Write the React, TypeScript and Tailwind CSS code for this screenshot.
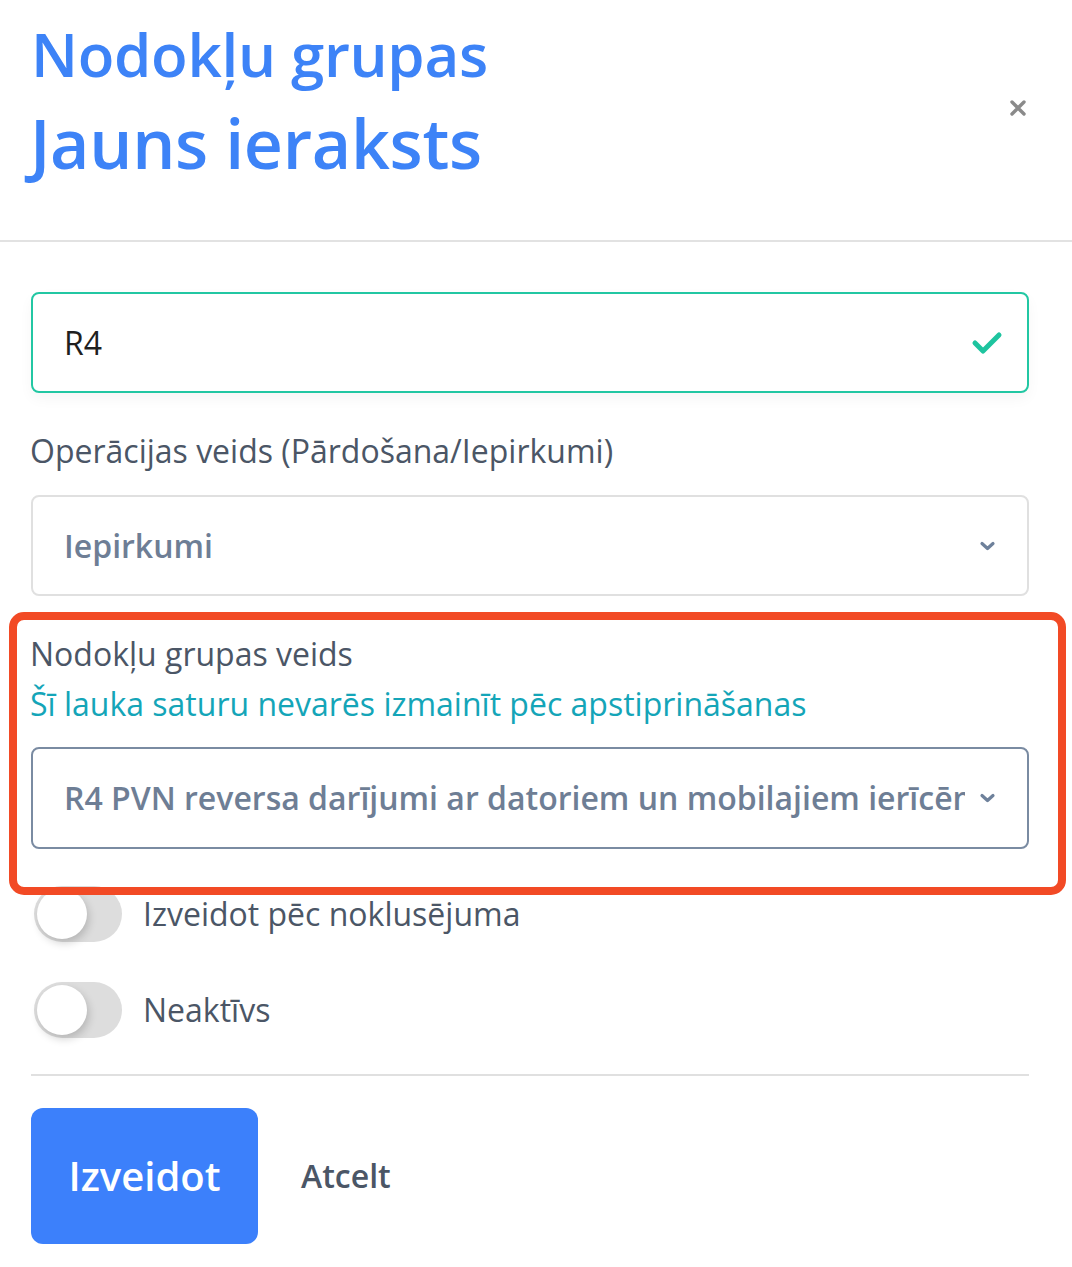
import React from "react";

const font = { fontFamily: '"Open Sans", "Noto Sans", sans-serif' };

function Chevron() {
  return (
    <svg width="17" height="10" viewBox="0 0 17 10" className="shrink-0">
      <path d="M3 2.5 L8.5 7.5 L14 2.5" fill="none" stroke="#6e819b" strokeWidth="3.2" strokeLinecap="round" strokeLinejoin="round" />
    </svg>
  );
}

function Toggle({ label }: { label: string }) {
  return (
    <div className="flex items-center h-[56px]">
      <div className="relative w-[88px] h-[56px] rounded-full bg-[#dddddd] ml-[3px] shrink-0">
        <div className="absolute left-[3px] top-[3px] w-[50px] h-[50px] rounded-full bg-white shadow-[2px_4px_8px_rgba(0,0,0,0.18)]" />
      </div>
      <span className="ml-[21px] text-[32px] leading-[44px] text-[#4b5666]">{label}</span>
    </div>
  );
}

export default function App() {
  return (
    <div className="relative w-[1072px] h-[1267px] bg-white" style={font}>
      {/* Header */}
      <div className="flex items-center justify-between border-b-2 border-[#e2e2e2] pl-[31px] pr-[43px] pt-[12px] pb-[50px]">
        <div className="font-semibold text-[#3d83f7]">
          <div className="text-[60px] leading-[84px] tracking-[-0.3px]">Nodokļu grupas</div>
          <div className="text-[68px] leading-[94px] -ml-[1px] tracking-[-0.3px]">Jauns ieraksts</div>
        </div>
        <button className="mt-[14px] w-[22px] h-[22px] flex items-center justify-center">
          <svg width="20" height="20" viewBox="0 0 20 20">
            <path d="M4 4 L16 16 M16 4 L4 16" stroke="#8a8a8a" strokeWidth="3.4" strokeLinecap="round" />
          </svg>
        </button>
      </div>

      {/* Form */}
      <div className="pl-[31px] pr-[43px] pt-[50px]">
        <div className="flex items-center justify-between h-[101px] rounded-[8px] border-2 border-[#22c7a3] pl-[31px] pr-[24px] shadow-[0_6px_14px_rgba(0,0,0,0.04)]">
          <span className="text-[32px] text-[#1f1f1f]">R4</span>
          <svg width="32" height="26" viewBox="0 0 32 26">
            <path d="M4 13 L12 21 L28 5" fill="none" stroke="#1ec49f" strokeWidth="5" strokeLinecap="round" strokeLinejoin="round" />
          </svg>
        </div>

        <div className="mt-[36px] text-[32px] leading-[44px] text-[#4b5666] -ml-[1px]">Operācijas veids (Pārdošana/Iepirkumi)</div>

        <div className="mt-[22px] flex items-center justify-between h-[101px] rounded-[8px] border-2 border-[#e0e0e0] pl-[31px] pr-[31px]">
          <span className="text-[32px] font-semibold text-[#6e7e95]">Iepirkumi</span>
          <Chevron />
        </div>

        <div className="mt-[36px] text-[32px] leading-[44px] text-[#4b5666] -ml-[1px]">Nodokļu grupas veids</div>
        <div className="mt-[6px] text-[32px] leading-[44px] text-[#14a5b8] -ml-[1px]">Šī lauka saturu nevarēs izmainīt pēc apstiprināšanas</div>

        <div className="mt-[21px] flex items-center justify-between h-[102px] rounded-[8px] border-2 border-[#7a8ba2] pl-[31px] pr-[31px]">
          <span className="min-w-0 text-[32px] font-semibold text-[#6e7e95] whitespace-nowrap overflow-hidden mr-[14px]">R4 PVN reversa darījumi ar datoriem un mobilajiem ierīcēm</span>
          <Chevron />
        </div>

        <div className="mt-[37px]">
          <Toggle label="Izveidot pēc noklusējuma" />
        </div>
        <div className="mt-[40px]">
          <Toggle label="Neaktīvs" />
        </div>

        <div className="mt-[36px] border-t-2 border-[#e0e0e0]" />

        <div className="mt-[32px] flex items-center">
          <button className="h-[136px] w-[227px] rounded-[12px] bg-[#3c80fb] text-white text-[40px] font-semibold">Izveidot</button>
          <button className="ml-[43px] text-[32px] font-semibold text-[#4b5666]">Atcelt</button>
        </div>
      </div>

      {/* Red annotation overlay */}
      <div className="absolute left-[9px] top-[612px] w-[1057px] h-[283px] rounded-[15px] border-[8px] border-[#f24a25] pointer-events-none" />
    </div>
  );
}
